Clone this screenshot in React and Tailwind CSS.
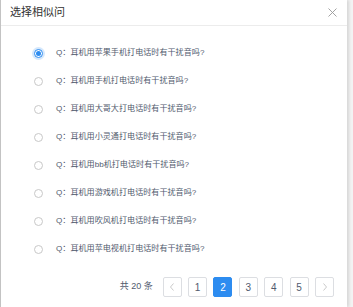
import React, { useState } from "react";

const questions = [
  "耳机用苹果手机打电话时有干扰音吗?",
  "耳机用手机打电话时有干扰音吗?",
  "耳机用大哥大打电话时有干扰音吗?",
  "耳机用小灵通打电话时有干扰音吗?",
  "耳机用bb机打电话时有干扰音吗?",
  "耳机用游戏机打电话时有干扰音吗?",
  "耳机用吹风机打电话时有干扰音吗?",
  "耳机用苹电视机打电话时有干扰音吗?",
];

function Radio({ checked }) {
  return checked ? (
    <span className="flex h-[9px] w-[9px] items-center justify-center rounded-full border border-[#2d8cf0] bg-white shadow-[0_0_0_2px_rgba(45,140,240,0.2)]">
      <span className="h-[5px] w-[5px] rounded-full bg-[#2d8cf0]" />
    </span>
  ) : (
    <span className="h-[9px] w-[9px] rounded-full border border-[#c8c8c8] bg-white" />
  );
}

export default function App() {
  const [selected, setSelected] = useState(0);
  const [page, setPage] = useState(2);

  return (
    <div
      className="flex h-[307px] w-[353px] bg-[#f3f3f3] text-[#515a6e]"
      style={{ fontFamily: '"Liberation Sans", "Noto Sans CJK SC", sans-serif' }}
    >
      <div className="w-px bg-[#c4c4c4]" />
      <div className="flex w-[346px] flex-col bg-white shadow-[2px_0_3px_rgba(0,0,0,0.12)]">
        {/* header */}
        <div className="flex h-[26px] items-center justify-between border-b border-[#ececec] pl-[9px] pr-[9px]">
          <span className="text-[11px] text-[#333]">选择相似问</span>
          <svg width="9" height="9" viewBox="0 0 9 9" className="mr-[1px]">
            <path d="M0.5 0.5 L8.5 8.5 M8.5 0.5 L0.5 8.5" stroke="#999" strokeWidth="0.9" fill="none" />
          </svg>
        </div>

        {/* list */}
        <div className="flex flex-col pt-[13px]">
          {questions.map((q, i) => (
            <button
              key={i}
              onClick={() => setSelected(i)}
              className="flex h-[28px] items-center pl-[33px] text-left"
            >
              <Radio checked={selected === i} />
              <span className="ml-[13px] text-[8.1px] text-[#515a6e]">Q：{q}</span>
            </button>
          ))}
        </div>

        {/* pagination */}
        <div className="mt-[14px] flex items-center justify-end pr-[13px]">
          <span className="mr-[10px] text-[9px] text-[#515a6e]">共 20 条</span>
          <div className="flex gap-[6.4px]">
            <button className="flex h-[20px] w-[19px] items-center justify-center rounded-[2px] border border-[#dcdee2] bg-white">
              <svg width="6" height="8" viewBox="0 0 6 8">
                <path d="M4.5 0.5 L1.5 4 L4.5 7.5" stroke="#bbb" strokeWidth="0.8" fill="none" />
              </svg>
            </button>
            {[1, 2, 3, 4, 5].map((n) => (
              <button
                key={n}
                onClick={() => setPage(n)}
                className={
                  page === n
                    ? "flex h-[20px] w-[19px] items-center justify-center rounded-[2px] border border-[#2d8cf0] bg-[#2d8cf0] text-[10px] text-white"
                    : "flex h-[20px] w-[19px] items-center justify-center rounded-[2px] border border-[#dcdee2] bg-white text-[10px] text-[#515a6e]"
                }
              >
                {n}
              </button>
            ))}
            <button className="flex h-[20px] w-[19px] items-center justify-center rounded-[2px] border border-[#dcdee2] bg-white">
              <svg width="6" height="8" viewBox="0 0 6 8">
                <path d="M1.5 0.5 L4.5 4 L1.5 7.5" stroke="#bbb" strokeWidth="0.8" fill="none" />
              </svg>
            </button>
          </div>
        </div>
      </div>
    </div>
  );
}
